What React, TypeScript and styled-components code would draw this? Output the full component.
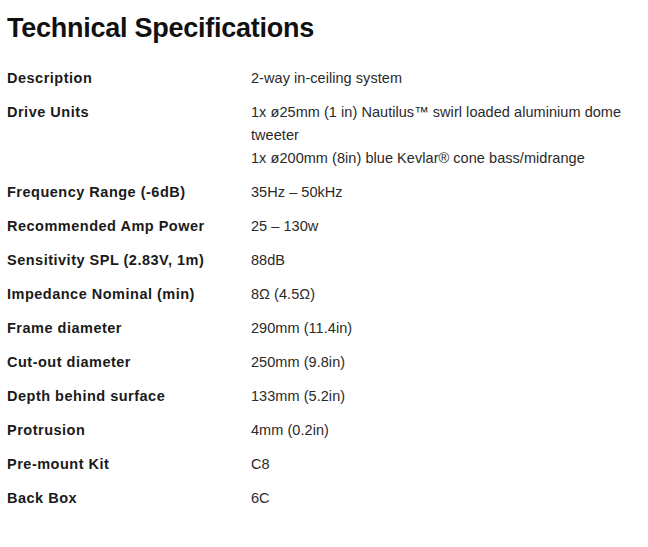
import React from "react";
import styled, { createGlobalStyle } from "styled-components";

const Global = createGlobalStyle`
  html, body { margin: 0; padding: 0; background: #ffffff; }
  body { font-family: "Liberation Sans", Arial, Helvetica, sans-serif; color: #1a1a1a; }
`;

const Page = styled.div`
  padding: 12px 7px 20px 7px;
`;

const Title = styled.h2`
  margin: 0 0 23px 0;
  font-size: 27px;
  line-height: 32px;
  font-weight: 700;
  color: #111111;
  letter-spacing: -0.25px;
`;

const SpecList = styled.dl`
  margin: 0;
  display: grid;
  grid-template-columns: 244px 1fr;
  row-gap: 11px;
`;

const Label = styled.dt`
  margin: 0;
  font-size: 14.5px;
  line-height: 23px;
  font-weight: 700;
  letter-spacing: 0.5px;
  color: #1a1a1a;
`;

const Value = styled.dd`
  margin: 0;
  font-size: 14.5px;
  line-height: 23px;
  letter-spacing: 0.05px;
  color: #2a2a2a;
`;

const Line = styled.span`
  display: block;
`;

const specs: { label: string; value: string[] }[] = [
  { label: "Description", value: ["2-way in-ceiling system"] },
  {
    label: "Drive Units",
    value: [
      "1x ø25mm (1 in) Nautilus™ swirl loaded aluminium dome tweeter",
      "1x ø200mm (8in) blue Kevlar® cone bass/midrange",
    ],
  },
  { label: "Frequency Range (-6dB)", value: ["35Hz – 50kHz"] },
  { label: "Recommended Amp Power", value: ["25 – 130w"] },
  { label: "Sensitivity SPL (2.83V, 1m)", value: ["88dB"] },
  { label: "Impedance Nominal (min)", value: ["8Ω (4.5Ω)"] },
  { label: "Frame diameter", value: ["290mm (11.4in)"] },
  { label: "Cut-out diameter", value: ["250mm (9.8in)"] },
  { label: "Depth behind surface", value: ["133mm (5.2in)"] },
  { label: "Protrusion", value: ["4mm (0.2in)"] },
  { label: "Pre-mount Kit", value: ["C8"] },
  { label: "Back Box", value: ["6C"] },
];

export default function App() {
  return (
    <>
      <Global />
      <Page>
        <Title>Technical Specifications</Title>
        <SpecList>
          {specs.map((s) => (
            <React.Fragment key={s.label}>
              <Label>{s.label}</Label>
              <Value>
                {s.value.map((v) => (
                  <Line key={v}>{v}</Line>
                ))}
              </Value>
            </React.Fragment>
          ))}
        </SpecList>
      </Page>
    </>
  );
}
